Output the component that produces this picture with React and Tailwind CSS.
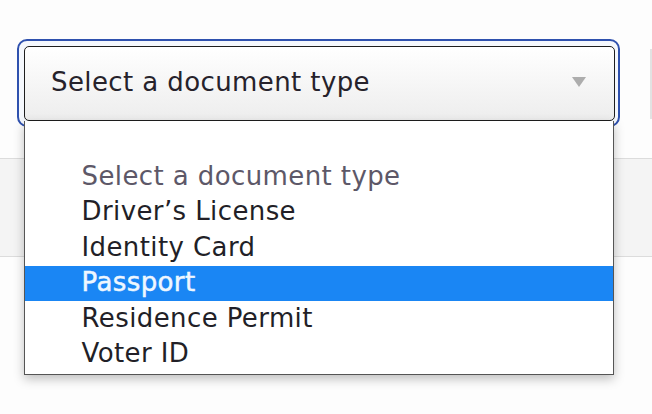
import React from 'react'

const options = [
    { label: '', placeholder: true },
    { label: 'Select a document type', placeholder: true },
    { label: "Driver’s License" },
    { label: 'Identity Card' },
    { label: 'Passport', active: true },
    { label: 'Residence Permit' },
    { label: 'Voter ID' },
]

const font = { fontFamily: '"DejaVu Sans", "Liberation Sans", sans-serif' }

const App = () => {
    return (
        <div className="w-[652px] h-[414px] overflow-hidden bg-[#fdfdfd]" style={font}>
            <div className="h-[158px] pt-[39px] pl-[17px] flex">
                <div className="relative w-[603px] h-[88px] border-[2.5px] border-[#2f51ae] rounded-[10px] pt-[4.5px] pl-[4.5px] pr-[3.5px] pb-[3.5px] bg-[#f5f8fd]">
                    <div className="h-[75px] border-[1.5px] border-[#1e1e1e] rounded-[5px] bg-linear-to-b from-white to-[#ededed] flex items-center justify-between pl-[26.5px] pr-[28px]">
                        <span className="text-[26px] tracking-[0.4px] text-[#26222b] pb-[1px]">Select a document type</span>
                        <svg width="14" height="10" viewBox="0 0 14 10" className="mb-[2px]">
                            <path d="M0 0 L14 0 L7 10 Z" fill="#adadad" />
                        </svg>
                    </div>

                    <div className="absolute left-[4.5px] top-[79.5px] w-[590px] bg-white border border-t-0 border-[#555] pt-[3px] pb-[2px] shadow-[0_4px_10px_rgba(0,0,0,0.25)] z-10">
                        {options.map((o, i) => (
                            <div
                                key={i}
                                className={`h-[35.5px] leading-[30px] pt-[1.5px] pb-[4px] pl-[57px] text-[26px] tracking-[0.4px] whitespace-nowrap ${o.active ? 'bg-[#1a86f4] text-[#eef7ff] [-webkit-text-stroke:0.5px_#eef7ff]' : o.placeholder ? 'text-[#5d5868]' : 'text-[#221f27]'}`}
                            >
                                {o.label}
                            </div>
                        ))}
                    </div>
                </div>
                <div className="ml-[30px] mt-[10px] w-[2px] h-[70px] bg-[#e2e2e2]" />
            </div>

            <div className="h-[99px] border-y border-[#dcdcdc] bg-[#f4f4f4]" />
        </div>
    )
}

export default App
